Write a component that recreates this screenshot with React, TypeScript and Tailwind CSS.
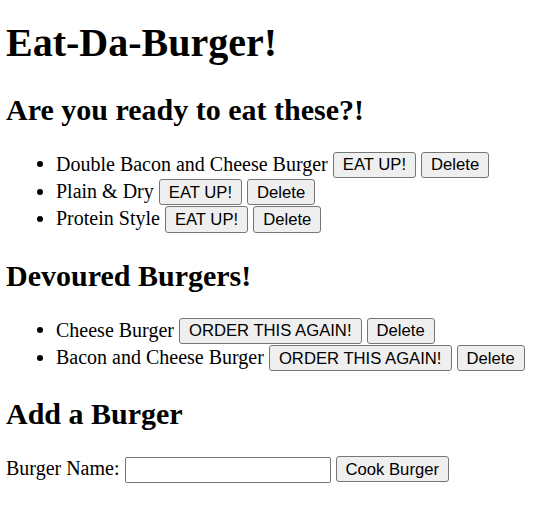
import React from "react";

const btn =
  "inline-block align-baseline h-[26.25px] py-[2.55px] px-[9px] border border-[#767676] rounded-[3px] bg-[#efefef] text-black text-[16.667px] leading-[normal] font-['Liberation_Sans',Arial,sans-serif]";

const h2 = "text-[30px] font-bold leading-[normal] my-[24.9px]";

function Item({ name, action }: { name: string; action: string }) {
  return (
    <li className="h-[27.4px]">
      {name} <button className={btn}>{action}</button>{" "}
      <button className={btn}>Delete</button>
    </li>
  );
}

export default function App() {
  return (
    <div className="px-[6px] pt-[19px] pb-[20px] text-[20px] leading-[normal] text-black bg-white font-['Liberation_Serif','Times_New_Roman',serif]">
      <h1 className="text-[40px] font-bold leading-[normal] mb-[26.8px]">Eat-Da-Burger!</h1>
      <h2 className={h2}>Are you ready to eat these?!</h2>
      <ul className="list-disc pl-[50px] my-[20px]">
        <Item name="Double Bacon and Cheese Burger" action="EAT UP!" />
        <Item name="Plain & Dry" action="EAT UP!" />
        <Item name="Protein Style" action="EAT UP!" />
      </ul>
      <h2 className={h2}>Devoured Burgers!</h2>
      <ul className="list-disc pl-[50px] my-[20px]">
        <Item name="Cheese Burger" action="ORDER THIS AGAIN!" />
        <Item name="Bacon and Cheese Burger" action="ORDER THIS AGAIN!" />
      </ul>
      <h2 className={h2}>Add a Burger</h2>
      <form onSubmit={(e) => e.preventDefault()} className="h-[27.4px]">
        Burger Name:{" "}
        <input
          type="text"
          className="inline-block align-baseline w-[206px] h-[26.25px] px-[3px] py-[2px] border border-[#767676] rounded-[2px] bg-white text-[16.667px] leading-[normal] font-['Liberation_Sans',Arial,sans-serif]"
        />{" "}
        <button type="submit" className={btn}>Cook Burger</button>
      </form>
    </div>
  );
}
